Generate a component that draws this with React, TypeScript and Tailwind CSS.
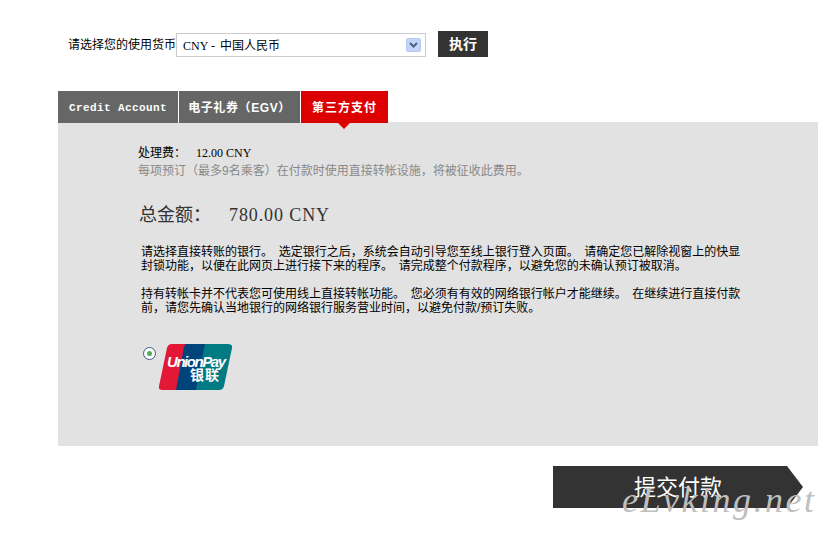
import React from 'react';

const CJK = "font-['Liberation_Sans','Noto_Sans_CJK_SC',sans-serif]";
const LATIN = "font-['Liberation_Serif',serif] text-[12px]";

const UnionPayLogo: React.FC = () => (
  <svg width="73" height="46" viewBox="0 0 73 46" className="block">
    <path d="M13 0H32L24 46H3Q-1 46 0 42L8 4Q9 0 13 0Z" fill="#e21836" />
    <path d="M27 0H50L42 46H17L25 3Q26 0 27 0Z" fill="#00447c" />
    <path d="M46 0H69Q74 0 73 4L65 42Q64 46 60 46H37Z" fill="#007b84" />
    <text x="8" y="23" fill="#fff" fontFamily="Liberation Sans" fontSize="15" fontStyle="italic" fontWeight="700" textLength="59">
      UnionPay
    </text>
    <text x="31" y="36" fill="#fff" fontFamily="Noto Sans CJK SC" fontSize="14" fontWeight="700" letterSpacing="1">
      银联
    </text>
  </svg>
);

export default function App() {
  return (
    <div className={`relative w-[826px] h-[535px] overflow-hidden bg-white text-[12px] text-black ${CJK}`}>
      {/* Currency row */}
      <div className="flex items-center pl-[68px] pt-[31px] h-[57px]">
        <span className="w-[108px] pt-[2px] whitespace-nowrap">请选择您的使用货币</span>
        <div className="flex items-center justify-between w-[250px] h-[24px] mt-[2px] border border-[#ccc] bg-white pl-[6px] pr-[4px]">
          <span className="flex items-center pt-px whitespace-pre">
            <span className={`w-[37px] ${LATIN}`}>CNY -</span>
            <span>中国人民币</span>
          </span>
          <span className="flex items-center justify-center w-[15px] h-[14px] rounded-[2px] border border-[#b5c9ee] bg-[#c3d5fb]">
            <svg width="9" height="6" viewBox="0 0 9 6">
              <path d="M1 1L4.5 4.5L8 1" fill="none" stroke="#4d6185" strokeWidth="2" />
            </svg>
          </span>
        </div>
        <button className="ml-[12px] w-[50px] h-[26px] bg-[#333] text-white text-[14px] font-bold">执行</button>
      </div>

      {/* Tabs */}
      <div className="flex gap-px ml-[58px] mt-[34px] h-[32px] text-white font-bold">
        <div className="flex items-center justify-center w-[120px] pt-[2px] bg-[#666] font-['Liberation_Mono',monospace] text-[11px] tracking-[0.4px]">
          Credit Account
        </div>
        <div className="flex items-center justify-center w-[121px] pt-px bg-[#666] tracking-[0.6px]">电子礼券（EGV）</div>
        <div className="relative flex items-center justify-center w-[87px] pt-px bg-[#d00] tracking-[1px]">
          第三方支付
          <span className="absolute left-[37px] top-[32px] w-0 h-0 border-x-[6px] border-x-transparent border-t-[6px] border-t-[#d00]" />
        </div>
      </div>

      {/* Payment panel */}
      <div className="ml-[58px] mt-[-1px] w-[760px] h-[324px] bg-[#e2e2e2] pl-[80px] pt-[24px]">
        <p className="flex items-center leading-[14px] whitespace-pre">
          <span className="w-[58px]">处理费：</span>
          <span className={LATIN}>12.00 CNY</span>
        </p>
        <p className="mt-[4px] leading-[14px] text-[#888] whitespace-nowrap">每项预订（最多9名乘客）在付款时使用直接转帐设施，将被征收此费用。</p>
        <p className="flex mt-[24px] ml-px leading-[26px] text-[18px] text-[#333] font-['Liberation_Serif','Noto_Sans_CJK_SC',serif] whitespace-pre">
          <span className="w-[90px]">总金额：</span>
          <span className="tracking-[0.9px]">780.00 CNY</span>
        </p>
        <div className="mt-[17px] ml-[3px] leading-[14px] whitespace-pre [word-spacing:-0.5px]">
          <p>
            请选择直接转账的银行。  选定银行之后，系统会自动引导您至线上银行登入页面。  请确定您已解除视窗上的快显
            <br />
            封锁功能，以便在此网页上进行接下来的程序。  请完成整个付款程序，以避免您的未确认预订被取消。
          </p>
          <p className="mt-[14px]">
            持有转帐卡并不代表您可使用线上直接转帐功能。  您必须有有效的网络银行帐户才能继续。  在继续进行直接付款
            <br />
            前，请您先确认当地银行的网络银行服务营业时间，以避免付款/预订失败。
          </p>
        </div>
        <div className="flex items-start mt-[29px] ml-[5px]">
          <span className="flex items-center justify-center w-[13px] h-[13px] mt-[3px] rounded-full border border-[#3d5a80] bg-white">
            <span className="w-[5px] h-[5px] rounded-full bg-[#4caf50]" />
          </span>
          <span className="ml-[3px]">
            <UnionPayLogo />
          </span>
        </div>
      </div>

      {/* Submit */}
      <div className="flex justify-end w-[803px] mt-[20px]">
        <button className="w-[250px] h-[42px] bg-[#333] text-white text-[22px] [clip-path:polygon(0_0,234px_0,250px_21px,234px_42px,0_42px)]">
          提交付款
        </button>
      </div>

      {/* Site watermark */}
      <span className="absolute left-[622px] top-[480px] font-['Liberation_Serif',serif] italic text-[36px] leading-[40px] tracking-[2.5px] text-[#bfbfbf] whitespace-nowrap pointer-events-none">
        eLvking.net
      </span>
    </div>
  );
}
